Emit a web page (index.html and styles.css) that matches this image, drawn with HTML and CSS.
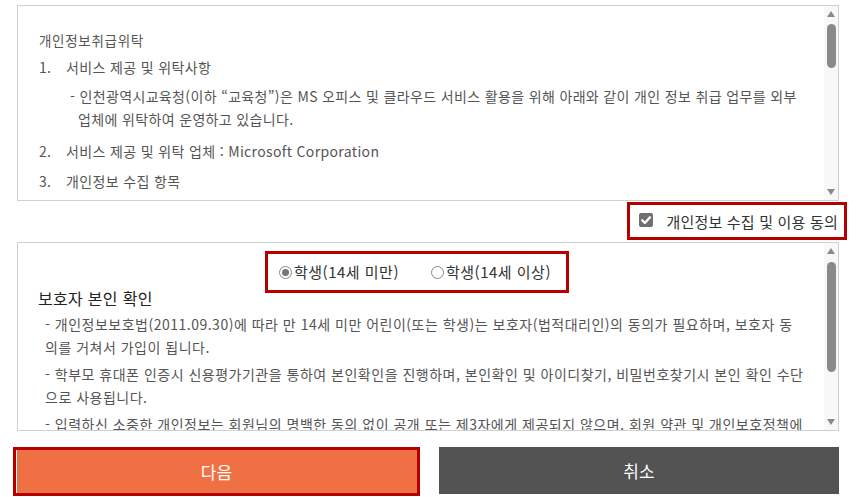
FILE: index.html
```html
<!DOCTYPE html>
<html lang="ko">
<head>
  <meta charset="UTF-8" />
  <meta name="viewport" content="width=device-width, initial-scale=1.0" />
  <title>개인정보 수집 및 이용 동의</title>
  <link rel="stylesheet" href="styles.css">
</head>
<body>
  <div class="page">
    <div class="scroll-box terms-box">
      <div class="scroll-content terms-content">
        <div class="terms-title">개인정보취급위탁</div>
        <div class="terms-item item-1"><span class="num">1.</span>서비스 제공 및 위탁사항</div>
        <p class="terms-sub">- 인천광역시교육청(이하 “교육청”)은 MS 오피스 및 클라우드 서비스 활용을 위해 아래와 같이 개인 정보 취급 업무를 외부 업체에 위탁하여 운영하고 있습니다.</p>
        <div class="terms-item item-2"><span class="num">2.</span>서비스 제공 및 위탁 업체 : Microsoft Corporation</div>
        <div class="terms-item item-3"><span class="num">3.</span>개인정보 수집 항목</div>
      </div>
      <div class="scrollbar">
        <span class="arrow-up"></span>
        <div class="track"><div class="thumb"></div></div>
        <span class="arrow-down"></span>
      </div>
    </div>

    <div class="agree-row">
      <label class="agree-label">
        <span class="checkbox">
          <svg width="14" height="14" viewBox="0 0 14 14"><path d="M3.2 7.2 L5.9 9.9 L11 4.2" fill="none" stroke="#fff" stroke-width="2.2" stroke-linecap="round" stroke-linejoin="round"/></svg>
        </span>
        개인정보 수집 및 이용 동의
      </label>
    </div>

    <div class="scroll-box guard-box">
      <div class="scroll-content guard-content">
        <div class="radio-row">
          <label class="radio-option"><span class="radio checked"></span>학생(14세 미만)</label>
          <label class="radio-option"><span class="radio"></span>학생(14세 이상)</label>
        </div>
        <div class="guard-title">보호자 본인 확인</div>
        <p class="guard-text">- 개인정보보호법(2011.09.30)에 따라 만 14세 미만 어린이(또는 학생)는 보호자(법적대리인)의 동의가 필요하며, 보호자 동의를 거쳐서 가입이 됩니다.</p>
        <p class="guard-text">- 학부모 휴대폰 인증시 신용평가기관을 통하여 본인확인을 진행하며, 본인확인 및 아이디찾기, 비밀번호찾기시 본인 확인 수단으로 사용됩니다.</p>
        <p class="guard-text">- 입력하신 소중한 개인정보는 회원님의 명백한 동의 없이 공개 또는 제3자에게 제공되지 않으며, 회원 약관 및 개인보호정책에 따라 보호됩니다.</p>
      </div>
      <div class="scrollbar">
        <span class="arrow-up"></span>
        <div class="track"><div class="thumb"></div></div>
        <span class="arrow-down"></span>
      </div>
    </div>

    <div class="btn-row">
      <button class="btn btn-next">다음</button>
      <button class="btn btn-cancel">취소</button>
    </div>
  </div>
</body>
</html>
```

FILE: styles.css
```css
body {
  margin: 0;
  font-family: "Noto Sans CJK KR", "Noto Sans", sans-serif;
  background-color: #fff;
  color: #555;
}

.page {
  width: 822px;
  margin-left: 17px;
  padding-top: 5px;
}

/* cajas con scroll */
.scroll-box {
  display: flex;
  border: 1px solid #d0d0d0;
  box-sizing: border-box;
}

.terms-box {
  height: 196px;
}

.guard-box {
  height: 189px;
}

.scroll-content {
  flex: 1;
  overflow: hidden;
}

.scrollbar {
  width: 14px;
  background-color: #f8f8f8;
  display: flex;
  flex-direction: column;
  align-items: center;
  padding: 5px 0;
  box-sizing: border-box;
}

.arrow-up {
  width: 0;
  height: 0;
  border-left: 4px solid transparent;
  border-right: 4px solid transparent;
  border-bottom: 6px solid #8a8a8a;
}

.arrow-down {
  width: 0;
  height: 0;
  border-left: 4px solid transparent;
  border-right: 4px solid transparent;
  border-top: 6px solid #8a8a8a;
}

.track {
  flex: 1;
  width: 9px;
  margin: 7px 0;
}

.thumb {
  background-color: #8a8a8a;
  border-radius: 5px;
  height: 44px;
}

.guard-box .track {
  margin-top: 8px;
}

.guard-box .thumb {
  height: 110px;
}

/* texto de la primera caja */
.terms-content {
  padding: 22px 0 0 21px;
  font-size: 14px;
  letter-spacing: 0.35px;
}

.terms-title {
  font-size: 13.5px;
  line-height: 24px;
  letter-spacing: 0.7px;
}

.terms-item {
  display: flex;
  line-height: 24px;
}

.terms-item .num {
  width: 27px;
  flex-shrink: 0;
}

.item-1 {
  margin-top: 3px;
}

.item-2 {
  margin-top: 8px;
}

.item-3 {
  margin-top: 6px;
}

.terms-sub {
  margin: 6px 20px 0 0;
  padding-left: 39px;
  text-indent: -8px;
  line-height: 23px;
}

/* casilla de acuerdo */
.agree-row {
  display: flex;
  justify-content: flex-end;
  margin-right: -5px;
  padding: 4px 0 5px;
}

.agree-label {
  display: flex;
  align-items: center;
  height: 32px;
  padding: 0 6px 0 9px;
  outline: 3px solid #b40000;
  font-size: 15px;
  color: #333;
  letter-spacing: 0.2px;
}

.checkbox {
  width: 14px;
  height: 14px;
  background-color: #707070;
  border-radius: 2px;
  margin: 0 13px 2px 0;
  display: flex;
}

/* segunda caja */
.guard-content {
  padding: 19px 0 0 20px;
}

.radio-row {
  display: flex;
  gap: 32px;
  width: 282px;
  height: 20px;
  margin-left: 238px;
  padding-left: 3px;
  box-sizing: border-box;
  outline: 3px solid #b40000;
  outline-offset: 8px;
  font-size: 15px;
  color: #333;
  letter-spacing: 0.5px;
}

.radio-option {
  display: flex;
  align-items: center;
  line-height: 20px;
}

.radio {
  width: 11px;
  height: 11px;
  border: 1px solid #888;
  border-radius: 50%;
  margin-right: 2px;
  display: flex;
  justify-content: center;
  align-items: center;
}

.radio.checked::after {
  content: "";
  width: 7px;
  height: 7px;
  border-radius: 50%;
  background-color: #777;
}

.guard-title {
  margin-top: 4px;
  font-size: 16px;
  line-height: 24px;
  color: #222;
  letter-spacing: 0.3px;
}

.guard-text {
  margin: 4px 20px 0 7px;
  font-size: 14px;
  line-height: 23px;
  letter-spacing: 0.5px;
}

.guard-title + .guard-text {
  margin-top: 3px;
}

/* botones */
.btn-row {
  display: flex;
  gap: 19px;
  margin: 16px 0 0 -4px;
}

.btn {
  border: none;
  color: #fff;
  font-family: inherit;
  font-size: 17px;
  cursor: pointer;
}

.btn-next {
  width: 407px;
  height: 49px;
  background-color: #ef7043;
  border: 3px solid #b40000;
  box-shadow: inset 1px 0 #fff;
}

.btn-cancel {
  width: 400px;
  height: 47px;
  background-color: #535353;
}
```
